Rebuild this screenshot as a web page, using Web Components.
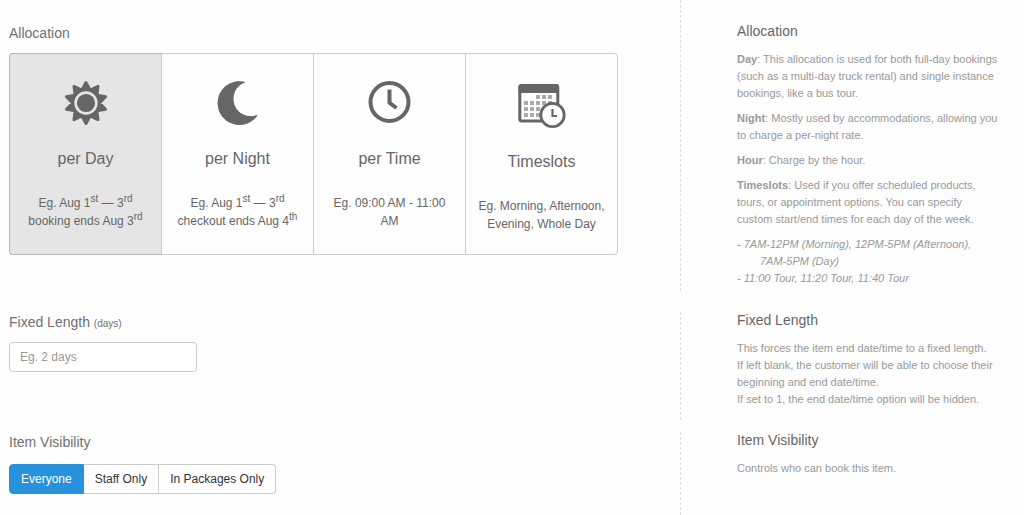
<!DOCTYPE html>
<html lang="en">
<head>
<meta charset="utf-8">
<meta name="viewport" content="width=device-width, initial-scale=1">
<title>Item settings</title>
<style>
  body {
    margin: 0;
    min-height: 100vh;
    display: flex;
    flex-direction: column;
    background: #fefefe;
    color: #666;
    font-family: "Liberation Sans", Arial, Helvetica, sans-serif;
    font-size: 12px;
  }
</style>
</head>
<body>

<form-row class="first" heading="Allocation">
  <card-group label="Allocation">
    <allocation-card icon="sun" heading="per Day" selected>Eg. Aug 1<sup>st</sup> — 3<sup>rd</sup><br>booking ends Aug 3<sup>rd</sup></allocation-card>
    <allocation-card icon="moon" heading="per Night">Eg. Aug 1<sup>st</sup> — 3<sup>rd</sup><br>checkout ends Aug 4<sup>th</sup></allocation-card>
    <allocation-card icon="clock" heading="per Time">Eg. 09:00 AM - 11:00 AM</allocation-card>
    <allocation-card icon="calendar" heading="Timeslots">Eg. Morning, Afternoon, Evening, Whole Day</allocation-card>
  </card-group>
  <help-text slot="help" heading="Allocation">
    <p><b>Day</b>: This allocation is used for both full-day bookings<br>(such as a multi-day truck rental) and single instance<br>bookings, like a bus tour.</p>
    <p><b>Night</b>: Mostly used by accommodations, allowing you<br>to charge a per-night rate.</p>
    <p><b>Hour</b>: Charge by the hour.</p>
    <p><b>Timeslots</b>: Used if you offer scheduled products,<br>tours, or appointment options. You can specify<br>custom start/end times for each day of the week.</p>
    <ul>
      <li>- 7AM-12PM (Morning), 12PM-5PM (Afternoon),<br>7AM-5PM (Day)</li>
      <li>- 11:00 Tour, 11:20 Tour, 11:40 Tour</li>
    </ul>
  </help-text>
</form-row>

<form-row>
  <text-field label="Fixed Length" unit="(days)" placeholder="Eg. 2 days"></text-field>
  <help-text slot="help" heading="Fixed Length">
    <p>This forces the item end date/time to a fixed length.<br>If left blank, the customer will be able to choose their<br>beginning and end date/time.<br>If set to 1, the end date/time option will be hidden.</p>
  </help-text>
</form-row>

<form-row class="last" heading="Item Visibility">
  <segmented-control label="Item Visibility" options="Everyone|Staff Only|In Packages Only"></segmented-control>
  <help-text slot="help" heading="Item Visibility">
    <p>Controls who can book this item.</p>
  </help-text>
</form-row>

<script>
const ICONS = {
  sun: `
    <svg width="48" height="56" viewBox="0 0 48 56" aria-hidden="true">
      <path d="${starPath(24, 29, 20.5, 13.5, 10)}" fill="#666" stroke="#666" stroke-width="3" stroke-linejoin="round"/>
      <circle cx="24" cy="29" r="10.4" fill="#666" stroke="#e5e5e5" stroke-width="2.6"/>
    </svg>`,
  moon: `
    <svg width="48" height="56" viewBox="0 0 48 56" aria-hidden="true">
      <path fill="#666" stroke="#666" stroke-linejoin="round" d="M30.5 8.2A21.500 21.500 0 1 0 43 41.500A17.600 17.600 0 0 1 30.500 8.200Z"/>
    </svg>`,
  clock: `
    <svg width="48" height="56" viewBox="0 0 48 56" fill="none" stroke="#666" aria-hidden="true">
      <circle cx="23.500" cy="28" r="19" stroke-width="4"/>
      <path stroke-width="4" d="M23.500 15.500V28.800L30.500 34"/>
    </svg>`,
  calendar: `
    <svg width="48" height="59" viewBox="0 0 48 59" aria-hidden="true">
      <rect x="1.800" y="11.500" width="38" height="35.500" rx="2" fill="#fefefe" stroke="#666" stroke-width="3"/>
      <path fill="#666" d="M0.500 19V12.500a2.500 2.500 0 0 1 2.500-2.500H38.500a2.500 2.500 0 0 1 2.500 2.500V19Z"/>
      <path fill="#aaa" d="M18 21h4v4h-4zM24 21h4v4h-4zM30 21h4v4h-4zM6 27h4v4h-4zM12 27h4v4h-4zM18 27h4v4h-4zM24 27h4v4h-4zM30 27h4v4h-4zM6 33h4v4h-4zM12 33h4v4h-4zM18 33h4v4h-4zM24 33h4v4h-4zM6 39h4v4h-4zM12 39h4v4h-4zM18 39h4v4h-4z"/>
      <circle cx="34.500" cy="41" r="11.700" fill="#fefefe" stroke="#666" stroke-width="2.800"/>
      <path d="M34.500 35V42H39" fill="none" stroke="#666" stroke-width="2.200"/>
    </svg>`
};

function starPath(cx, cy, outer, inner, points) {
  let d = '';
  for (let i = 0; i < points * 2; i++) {
    const r = i % 2 ? inner : outer;
    const a = Math.PI * i / points - Math.PI / 2;
    d += `${i ? 'L' : 'M'}${(cx + r * Math.cos(a)).toFixed(1)} ${(cy + r * Math.sin(a)).toFixed(1)}`;
  }
  return d + 'Z';
}

class FormRow extends HTMLElement {
  connectedCallback() {
    const heading = this.getAttribute('heading');
    this.attachShadow({ mode: 'open' });
    this.shadowRoot.innerHTML = `
      <style>
        :host {
          display: grid;
          grid-template-columns: 1fr 344px;
          margin-bottom: 12px;
        }
        :host(.first) {
          --top: 23px;
          --bottom: 4px;
          margin-bottom: 21px;
        }
        :host(.last) {
          flex: 1;
          margin-bottom: 0;
        }
        .main {
          padding: var(--top, 0) 62px 0 9px;
        }
        .aside {
          padding: var(--top, 0) 14px var(--bottom, 12px) 56px;
          border-left: 1px dashed #ddd;
        }
        h2 {
          margin: 0 0 10px;
          color: #707070;
          font-size: 14px;
          font-weight: normal;
          line-height: 20px;
        }
        @media (max-width: 768px) {
          :host {
            grid-template-columns: 1fr;
          }
        }
      </style>
      <div class="main">
        ${heading ? `<h2>${heading}</h2>` : ''}
        <slot></slot>
      </div>
      <div class="aside"><slot name="help"></slot></div>
    `;
  }
}

class HelpText extends HTMLElement {
  connectedCallback() {
    this.attachShadow({ mode: 'open' });
    this.shadowRoot.innerHTML = `
      <style>
        :host {
          display: block;
          color: #999;
          font-size: 11px;
          line-height: 17px;
        }
        h3 {
          margin: 0 0 11px;
          color: #666;
          font-size: 14px;
          font-weight: normal;
          line-height: 17px;
        }
        ::slotted(p) {
          margin: 0 0 8px;
        }
        ::slotted(p:last-child) {
          margin-bottom: 0;
        }
        ::slotted(ul) {
          margin: 0;
          padding: 0 0 0 23px;
          list-style: none;
          font-style: italic;
          text-indent: -23px;
        }
      </style>
      <h3>${this.getAttribute('heading')}</h3>
      <slot></slot>
    `;
  }
}

class CardGroup extends HTMLElement {
  connectedCallback() {
    this.attachShadow({ mode: 'open' });
    this.shadowRoot.innerHTML = `
      <style>
        :host {
          display: block;
        }
        .cards {
          display: flex;
          max-width: 609px;
          box-sizing: border-box;
          border: 1px solid #ccc;
          border-radius: 4px;
        }
      </style>
      <div class="cards" role="group" aria-label="${this.getAttribute('label')}"><slot></slot></div>
    `;
    this.addEventListener('card-select', (e) => {
      this.querySelectorAll('allocation-card').forEach((card) => {
        card.toggleAttribute('selected', card === e.target);
      });
    });
  }
}

class AllocationCard extends HTMLElement {
  static get observedAttributes() {
    return ['selected'];
  }

  connectedCallback() {
    this.attachShadow({ mode: 'open' });
    this.shadowRoot.innerHTML = `
      <style>
        :host {
          display: flex;
          flex: 1 1 0;
          min-width: 0;
          border-left: 1px solid #ccc;
        }
        :host(:first-child) {
          border-left: 0;
        }
        :host([selected]) {
          background: #e5e5e5;
          box-shadow: 0 0 0 1px #b8b8b8;
          border-radius: 3px 0 0 3px;
        }
        button {
          flex: 1;
          display: flex;
          flex-direction: column;
          align-items: center;
          min-width: 0;
          padding: 20px 10px 21px;
          border: 0;
          background: none;
          color: inherit;
          font: inherit;
          line-height: 18px;
          cursor: pointer;
        }
        svg {
          display: block;
        }
        .title {
          margin: 17px 0 23px;
          font-size: 16px;
          line-height: 24px;
        }
        ::slotted(sup) {
          position: relative;
          top: -5px;
          font-size: 10px;
          line-height: 0;
          vertical-align: baseline;
        }
      </style>
      <button type="button">
        ${ICONS[this.getAttribute('icon')]}
        <span class="title">${this.getAttribute('heading')}</span>
        <span><slot></slot></span>
      </button>
    `;
    this.button = this.shadowRoot.querySelector('button');
    this.button.addEventListener('click', () => {
      this.dispatchEvent(new CustomEvent('card-select', { bubbles: true }));
    });
    this.attributeChangedCallback();
  }

  attributeChangedCallback() {
    if (this.button) {
      this.button.setAttribute('aria-pressed', this.hasAttribute('selected'));
    }
  }
}

class TextField extends HTMLElement {
  connectedCallback() {
    this.attachShadow({ mode: 'open' });
    this.shadowRoot.innerHTML = `
      <style>
        :host {
          display: block;
        }
        label {
          display: block;
          margin-bottom: 10px;
          color: #707070;
          font-size: 14px;
          line-height: 20px;
        }
        small {
          font-size: 10px;
          line-height: 1;
        }
        input {
          display: block;
          box-sizing: border-box;
          width: 188px;
          max-width: 100%;
          height: 30px;
          padding: 0 10px;
          border: 1px solid #ccc;
          border-radius: 4px;
          background: #fff;
          color: #555;
          font: inherit;
        }
        input::placeholder {
          color: #999;
        }
      </style>
      <label for="field">${this.getAttribute('label')} <small>${this.getAttribute('unit')}</small></label>
      <input id="field" type="text" placeholder="${this.getAttribute('placeholder')}">
    `;
  }
}

class SegmentedControl extends HTMLElement {
  connectedCallback() {
    const options = this.getAttribute('options').split('|');
    this.attachShadow({ mode: 'open' });
    this.shadowRoot.innerHTML = `
      <style>
        :host {
          display: block;
          padding: 2px 0;
        }
        .group {
          display: flex;
        }
        button {
          height: 30px;
          padding: 0 11px;
          border: 1px solid #ccc;
          border-left-width: 0;
          background: #fff;
          color: #333;
          font: inherit;
          cursor: pointer;
        }
        button:first-child {
          border-left-width: 1px;
          border-radius: 4px 0 0 4px;
        }
        button:last-child {
          border-radius: 0 4px 4px 0;
        }
        button[aria-pressed="true"] {
          border-color: #2793dd;
          background: #2793dd;
          color: #fff;
        }
      </style>
      <div class="group" role="group" aria-label="${this.getAttribute('label')}">
        ${options.map((text, i) => `<button type="button" aria-pressed="${i === 0}">${text}</button>`).join('')}
      </div>
    `;
    const buttons = this.shadowRoot.querySelectorAll('button');
    buttons.forEach((button) => {
      button.addEventListener('click', () => {
        buttons.forEach((b) => b.setAttribute('aria-pressed', b === button));
      });
    });
  }
}

customElements.define('form-row', FormRow);
customElements.define('help-text', HelpText);
customElements.define('card-group', CardGroup);
customElements.define('allocation-card', AllocationCard);
customElements.define('text-field', TextField);
customElements.define('segmented-control', SegmentedControl);
</script>
</body>
</html>
